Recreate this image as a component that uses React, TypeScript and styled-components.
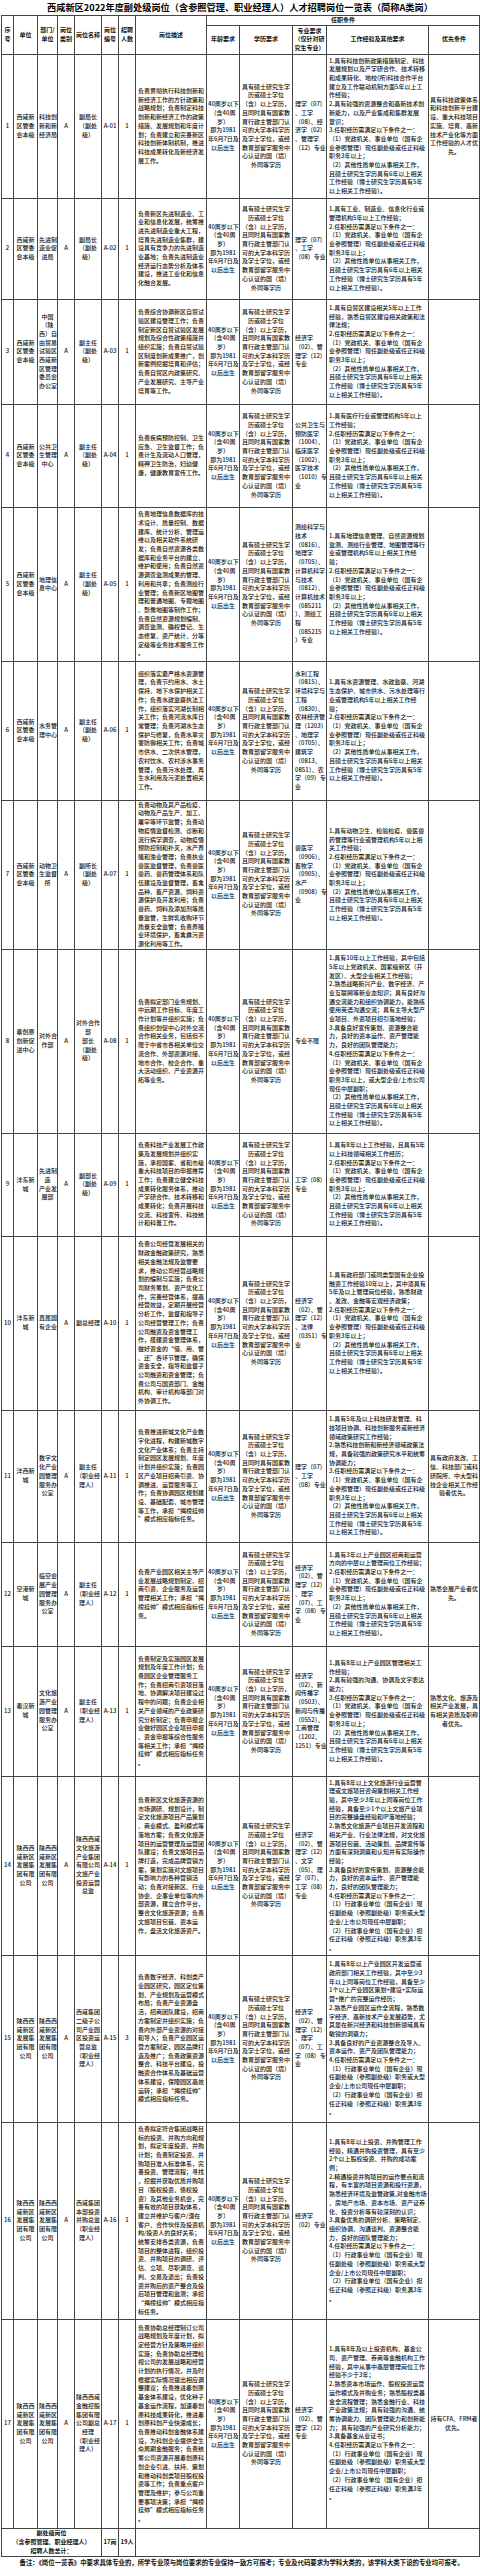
import React from "react";
import styled, { createGlobalStyle } from "styled-components";

const GlobalStyle = createGlobalStyle`
  html, body {
    margin: 0;
    padding: 0;
    background: #fff;
  }
  body {
    font-family: "Noto Sans CJK SC", "Noto Sans", sans-serif;
    color: #111;
  }
`;

const Page = styled.div`
  width: 480px;
  background: #fff;
`;

const Title = styled.h1`
  margin: 0;
  height: 15px;
  line-height: 15px;
  font-size: 9.2px;
  font-weight: 700;
  text-align: center;
  color: #000;
  white-space: nowrap;
`;

const Table = styled.table`
  margin-left: 1px;
  width: 478px;
  border-collapse: collapse;
  table-layout: fixed;
`;

const HeadCell = styled.th`
  border: 1px solid #444;
  padding: 0 1px;
  font-size: 6px;
  line-height: 8.7px;
  font-weight: 700;
  white-space: pre;
  text-align: center;
  vertical-align: middle;
  overflow: visible;
`;

const Cell = styled.td<{ $align?: "left" | "center"; $bold?: boolean }>`
  border: 1px solid #444;
  padding: 0 ${(p) => (p.$align === "left" ? "2px" : "1px")};
  font-size: 6px;
  line-height: 8.7px;
  font-weight: ${(p) => (p.$bold ? 700 : 500)};
  white-space: pre;
  text-align: ${(p) => p.$align ?? "center"};
  vertical-align: middle;
  overflow: visible;
`;

const Row = styled.tr<{ $h: number }>`
  height: ${(p) => p.$h}px;
`;

const NoteCell = styled.td`
  border-top: 1px solid #444;
  padding: 0 0 0 18px;
  height: 16px;
  font-size: 6.4px;
  font-weight: 700;
  line-height: 12px;
  white-space: nowrap;
  text-align: left;
  vertical-align: top;
`;

const widths = [12, 24, 20, 17, 27, 17, 17, 71, 33, 53, 34, 102, 51];

const AGE = "40周岁以下\n（含40周\n岁）\n即为1981\n年6月7日及\n以后出生";
const EDU =
  "具有硕士研究生学\n历或硕士学位\n（含）以上学历，\n且同时具有国家教\n育行政主管部门认\n可的大学本科学历\n及学士学位，或经\n教育部留学服务中\n心认证的国（境）\n外同等学历";
const GOV_TAIL =
  "（2）其他性质单位从事相关工作，\n且硕士研究生学历具有6年以上相关\n工作经验（博士研究生学历具有5年\n以上相关工作经验）。";
const GOV =
  "（1）党政机关、事业单位（国有企\n业参照管理）现任副处级或任正科级\n职务3年以上；\n" + GOV_TAIL;
const GROUP =
  "（1）行政事业单位（国有企业）现\n任副处级（参照副处级）职务或大型\n企业/上市公司现任中层副职；\n（2）行政事业单位（国有企业）担\n任正科级（参照正科级）职务满3年\n。";
const MGMT = "西咸新\n区管委\n会本级";
const GROUP_CO = "陕西西\n咸新区\n发展集\n团有限\n公司";

type Post = {
  no: number;
  unit: string;
  dept: string;
  name: string;
  count: number;
  desc: string;
  major: string;
  exp: string;
  pref?: string;
  h: number;
};

const posts: Post[] = [
  {
    no: 1,
    unit: MGMT,
    dept: "科技创\n新和新\n经济局",
    name: "副局长\n（副处\n级）",
    count: 1,
    desc: "负责贯彻执行科技创新和\n新经济工作的方针政策和\n战略规划；负责制定科技\n创新和新经济工作的政策\n措施、发展规划和年度计\n划；负责建立和完善新区\n科技创新体制机制，推进\n科技成果转化及新经济发\n展工作。",
    major: "理学（07）\n、工学\n（08）、经\n济学（02）\n、管理学\n（12）专业",
    exp:
      "1.具有科技创新政策措施制定、科技\n发展规划以及产学研合作、技术转移\n和成果转化、地校(所)科技合作平台\n建立及工作联动机制方面5年以上工\n作经验；\n2.具有较强的资源整合和高新技术创\n新能力，以及产业集成和集群发展\n意识；\n3.任职经历需满足以下条件之一：\n" +
      GOV,
    pref: "具有科技政策体系\n和科技创新平台建\n设、重大科技项目\n实施、培育、高新\n技术产业化等方面\n工作经验的人才优\n先。",
    h: 144,
  },
  {
    no: 2,
    unit: MGMT,
    dept: "先进制\n造业促\n进局",
    name: "副局长\n（副处\n级）",
    count: 1,
    desc: "负责新区先进制造业、工\n业和信息化发展，统筹推\n进先进制造业重大工程，\n培育先进制造业集群，建\n设具有竞争力的先进制造\n业基地；负责先进制造业\n经济运行态势分析及体系\n建设，推进工业化和信息\n化融合发展。",
    major: "理学（07）\n、工学\n（08）专业",
    exp:
      "1.具有工业、制造业、信息化行业或\n管理机构5年以上工作经验；\n2.任职经历需满足以下条件之一：\n" +
      GOV,
    h: 101,
  },
  {
    no: 3,
    unit: MGMT,
    dept: "中国\n（陕\n西）自\n由贸易\n试验区\n西咸新\n区管理\n委员会\n办公室",
    name: "副主任\n（副处\n级）",
    count: 1,
    desc: "负责综合协调新区自贸试\n验区建设管理工作；负责\n制定新区自贸试验区发展\n规划及综合性政策措施并\n组织实施；负责自贸试验\n区制度创新成果推广，创\n新案例挖掘培育和评估；\n负责自贸区内政策研究、\n产业发展研究、主导产业\n培育等工作。",
    major: "经济学\n（02）、管\n理学（12）\n专业",
    exp:
      "1.具有自贸区建设相关5年以上工作\n经验，熟悉自贸区建设相关政策和法\n律法规；\n2.任职经历需满足以下条件之一：\n" +
      GOV,
    h: 105,
  },
  {
    no: 4,
    unit: MGMT,
    dept: "公共卫\n生管理\n中心",
    name: "副主任\n（副处\n级）",
    count: 1,
    desc: "负责疾病预防控制、卫生\n应急、卫生监督工作；负\n责计生及流动人口管理，\n精神卫生防治，妇幼健\n康，健康教育宣传工作。",
    major: "公共卫生与\n预防医学\n（1004）、\n临床医学\n（1002）、\n医学技术\n（1010）专\n业",
    exp:
      "1.具有医疗行业或管理机构5年以上\n工作经验；\n2.任职经历需满足以下条件之一：\n" +
      GOV,
    h: 103,
  },
  {
    no: 5,
    unit: MGMT,
    dept: "地理信\n息中心",
    name: "副主任\n（副处\n级）",
    count: 1,
    desc: "负责地理信息数据库的技\n术设计、质量控制、数据\n建库、统计分析、管理运\n维以及相关软件系统研\n发；负责自然资源各类数\n据库和业务平台的建立、\n维护和使用；负责自然资\n源调查监测成果的管理、\n利用和共享；负责测绘行\n业管理；负责新区地图管\n理和普通地图、专题地图\n、影像地图等制作工作；\n负责自然资源规划编制、\n调查监测、确权登记、生\n态修复、资产统计、分等\n定级等业务技术服务工作\n。",
    major: "测绘科学与\n技术\n（0816）、\n地理学\n（0705）、\n计算机科学\n与技术\n（0812）、\n计算机技术\n（085211\n）、测绘工\n程\n（085215\n）专业",
    exp:
      "1.具有地理信息管理、自然资源规划\n监测、测绘行业管理、地图管理等行\n业或管理机构5年以上相关工作经\n验；\n2.任职经历需满足以下条件之一：\n" +
      GOV,
    h: 154,
  },
  {
    no: 6,
    unit: MGMT,
    dept: "水务管\n理中心",
    name: "副主任\n（副处\n级）",
    count: 1,
    desc: "组织落实最严格水资源管\n理，负责节约用水、水土\n保持、地下水保护相关工\n作；负责水政监察执法工\n作，组织落实河湖长制相\n关工作；负责河流水库日\n常管理；负责河湖水生态\n保护与修复，负责水旱灾\n害防御相关工作；负责城\n市供水、二次供水管理，\n农村饮水、农村涉水事务\n管理，负责污水处理、再\n生水利用及污泥处置相关\n工作。",
    major: "水利工程\n（0815）、\n环境科学与\n工程\n（0830）、\n农林经济管\n理（1203）\n、地理学\n（0705）、\n建筑学\n（0813、\n0851）、农\n学（09）专\n业",
    exp:
      "1.具有水资源管理、水政监察、河湖\n生态保护、城市供水、污水处理等行\n业或管理机构5年以上相关工作经\n验；\n2.任职经历需满足以下条件之一：\n" +
      GOV,
    h: 139,
  },
  {
    no: 7,
    unit: MGMT,
    dept: "动物卫\n生监督\n所",
    name: "副所长\n（副处\n级）",
    count: 1,
    desc: "负责动物及其产品检疫、\n动物及产品生产、加工、\n屠宰等环节监管；负责动\n物疫情监督检测、诊断和\n流行病学调查，动物疫情\n预防控制和扑灭，水产养\n殖和渔业管理；负责执业\n兽医监督管理，负责兽医\n兽药、兽药管理体系和队\n伍建设及监督管理，畜禽\n品种、畜产资源、饲料资\n源保护及开发利用；负责\n兽药、饲料及添加剂等质\n量监管，生鲜乳收购环节\n质量安全监管；负责养殖\n业环境保护，畜禽粪污资\n源化利用等工作。",
    major: "兽医学\n（0906）、\n畜牧学\n（0905）、\n水产\n（0908）专\n业",
    exp:
      "1.具有动物卫生、检验检疫、兽医兽\n药管理等行业或管理机构5年以上相\n关工作经验；\n2.任职经历需满足以下条件之一：\n" +
      GOV,
    h: 148,
  },
  {
    no: 8,
    unit: "秦创原\n创新促\n进中心",
    dept: "对外合\n作部",
    name: "对外合作\n部\n部长\n（副处\n级）",
    count: 1,
    desc: "负责拟定部门业务规划、\n中远期工作目标、年度工\n作计划等并组织实施；负\n责组织创促中心对外交流\n合作相关业务，包括但不\n限于中省市各相关单位交\n流合作、外部资源对接、\n地市合作、校企合作、重\n大活动组织、产业资源开\n拓等业务。",
    major: "专业不限",
    exp:
      "1.具有10年以上工作经验，其中包括\n5年以上党政机关、国家级新区（开\n发区）、大型企业相关工作经验；\n2.熟悉战略新兴产业、数字经济、产\n业互联网等新业态知识；具有良好沟\n通交流能力和组织协调能力，能熟练\n使用英语沟通交流；具有主导大型产\n业项目、外资项目招引落地经验；\n3.具备良好宣传策划、资源整合能\n力，良好的资本运作、资产管理能\n力，良好的团队管理能力；\n4.任职经历需满足以下条件之一：\n（1）党政机关、事业单位（国有企\n业参照管理）现任副处级或任正科级\n职务3年以上，或大型企业/上市公司\n现任中层副职；\n" +
      GOV_TAIL,
    h: 184,
  },
  {
    no: 9,
    unit: "沣东新\n城",
    dept: "先进制\n造\n产业发\n展部",
    name: "副部长\n（副处\n级）",
    count: 1,
    desc: "负责科技产业发展工作政\n策及发展规划并组织实\n施，承担国家、省和市级\n重大科技项目的申报推荐\n工作；负责建立健全科技\n成果转化服务体系，推动\n产学研合作、技术转移和\n成果转化；负责开展科技\n交流、科技宣传、科技统\n计和科普工作。",
    major: "工学（08）\n专业",
    exp:
      "1.具有8年以上工作经验，且具有5年\n以上科技领域相关工作经历；\n2.任职经历需满足以下条件之一：\n" +
      GOV,
    h: 103,
  },
  {
    no: 10,
    unit: "沣东新\n城",
    dept: "直属国\n有企业",
    name: "副总经理",
    count: 1,
    desc: "负责公司经营发展相关的\n财政金融政策研究，熟悉\n相关金融法规及监管要\n求，推动公司经营战略规\n划的编制与实施；负责公\n司财务筹划、资产优化工\n作，完善经营体系，提高\n经营效益，定期开展经营\n分析工作，监督和指导子\n公司经营管理工作；负责\n公司融资及资金管理工\n作，搭建资金管理体系，\n做好资金的“借、用、管\n、还”各环节管理，确保\n资金安全，指导和监督子\n公司融资和资金管理；负\n责公司与国资部门、金融\n机构、审计机构等部门对\n外协调工作。",
    major: "经济学\n（02）、管\n理学（12）\n、法律\n（0351）专\n业",
    exp:
      "1.具有政府部门或同类型国有企业投\n融资工作经验10年以上，其中须具有\n5年及以上管理岗位经验，熟悉财政\n、发改、金融等宏观经济政策；\n2.任职经历需满足以下条件之一：\n" +
      GOV,
    h: 174,
  },
  {
    no: 11,
    unit: "沣西新\n城",
    dept: "数字文\n化产业\n园管理\n服务办\n公室",
    name: "副主任\n（职业经\n理人）",
    count: 1,
    desc: "负责推进新城文化产业数\n字化进程，构建新城数字\n文化产业体系；负责主持\n制定园区发展规划、年度\n计划并组织实施；负责园\n区产业项目招商引资、协\n调推进、运营服务等工\n作；负责协调园区规划建\n设、基础配套、城市管理\n等工作，承担“揭榜挂帅\n”模式相应指标任务。",
    major: "理学（07）\n、工学\n（08）专业",
    exp:
      "1.具有5年及以上科技研发管理、科\n技项目协调、科技创新服务或新经济\n领域政策研究工作经验；\n2.熟悉科技创新和新经济领域政策法\n规，具备较强的政策研究水平和统筹\n协调能力；\n3.任职经历需满足以下条件之一：\n" +
      GOV,
    pref: "具有政府发改、工\n信、科技部门或科\n研院所、中大型科\n技企业相关工作经\n验者优先。",
    h: 132,
  },
  {
    no: 12,
    unit: "空港新\n城",
    dept: "临空会\n展产业\n园管理\n服务办\n公室",
    name: "副主任\n（职业经\n理人）",
    count: 1,
    desc: "负责产业园区相关主导产\n业发展战略规划制定、招\n商引资、企业服务及运营\n管理相关工作；承担“揭\n榜挂帅”模式相应指标任\n务。",
    major: "经济学\n（02）、管\n理学（12）\n、理学\n（07）、工\n学（08）专\n业",
    exp:
      "1.具有3年以上产业园区招商和运营\n方向的中层以上管理岗位工作经验；\n2.任职经历需满足以下条件之一：\n" +
      GOV,
    pref: "熟悉会展产业者优\n先。",
    h: 104,
  },
  {
    no: 13,
    unit: "秦汉新\n城",
    dept: "文化旅\n游产业\n园管理\n服务办\n公室",
    name: "副主任\n（职业经\n理人）",
    count: 1,
    desc: "负责制定及实施园区发展\n规划及年度工作计划；负\n责园区企业管理服务工\n作；负责招商引资项目落\n地、协调解决项目建设过\n程中的问题；负责企业相\n关产业领域的产业政策研\n究分析制定；负责申报企\n业做好园区企业项目申报\n、资金申报等综合性服务\n等相关工作；承担“揭榜\n挂帅”模式相应指标任务\n。",
    major: "经济学\n（02）、新\n闻传播学\n（0503）、\n新闻与传播\n（0552）、\n工商管理\n（1202、\n1251）专业",
    exp:
      "1.具有8年以上产业园区管理相关工\n作经验；\n2.具有较强的沟通、协调及文字表达\n能力；\n3.任职经历需满足以下条件之一：\n" +
      GOV,
    pref: "熟悉文化、旅游及\n相关产业发展，具\n有相关资质及职称\n者优先。",
    h: 130,
  },
  {
    no: 14,
    unit: GROUP_CO,
    dept: GROUP_CO,
    name: "陕西西咸\n文化旅游\n产业集团\n有限公司\n文旅产业\n投资运营\n总监",
    count: 1,
    desc: "负责新区文化旅游资源的\n市场调研、规划设计，制\n定文化旅游项目产品策划\n、商业模式、盈利模式等\n落地方案；负责文化旅游\n项目的运营管理及运营团\n队建设；负责文旅项目品\n牌打造，完成品牌营销方\n案，策划实施对文旅项目\n有影响力的各种营销活\n动；负责对接新区、行业\n协会、企事业单位等内外\n部资源，建立合作平台，\n整合文化旅游资源；负责\n文旅项目包装、资本运\n作，盘活文化旅游资产。",
    major: "经济学\n（02）、管\n理学（12）\n、文学\n（05）、理\n学（07）、\n工学（08）\n专业",
    exp:
      "1.具有8年以上文化旅游行业运营管\n理或文旅项目咨询策划相关工作经\n验，其中至少3年以上同等岗位工作\n经验，具备至少1个以上文旅产业项\n目的完整操盘经验和IP落地经验；\n2.熟悉文化旅游产业项目开发流程和\n相关产业、行业法律法规，对文化旅\n游项目包装、活动策划、品牌宣传等\n方面有深刻洞察和认知并有实际操作\n经验；\n3.具备良好的宣传策划、资源整合能\n力，良好的资本运作、资产管理能\n力，良好的团队管理能力；\n4.任职经历需满足以下条件之一：\n" +
      GROUP,
    h: 179,
  },
  {
    no: 15,
    unit: GROUP_CO,
    dept: GROUP_CO,
    name: "西咸集团\n二级子公\n司产业园\n区投资运\n营总监\n（职业经\n理人）",
    count: 3,
    desc: "负责数字经济、科创类产\n业园区研究，园区定位策\n划、产业规划及运营模式\n布局；负责产业资源盘\n活，招商团队建设，招商\n方案制定并组织实施；负\n责内外部产业资源的对接\n和导入；负责产业园区运\n营方案制定，园区品牌打\n造及推广；负责政策资源\n整合、科技平台建设，投\n融资合作体系及基础运营\n体系建设，保障园区高效\n运转；承担“揭榜挂帅”\n模式相应指标任务。",
    major: "经济学\n（02）、管\n理学（12）\n、理学\n（07）、工\n学（08）专\n业",
    exp:
      "1.具有8年以上产业园区开发运营或\n政府部门相关工作经验，其中至少3\n年以上同等岗位工作经验，具备至少\n1个以上产业园区策划+建设+实际运\n营+推广的完整运作经历；\n2.熟悉产业园区运作全流程，熟悉数\n字经济、高新技术产业发展趋势，尤\n其是在新兴经济和科技创新领域具有\n敏锐的洞察力；\n3.具备良好的产业资源整合及导入、\n资本运作、资产及团队管理能力；\n4.任职经历需满足以下条件之一：\n" +
      GROUP,
    h: 167,
  },
  {
    no: 16,
    unit: GROUP_CO,
    dept: GROUP_CO,
    name: "西咸集团\n本部投资\n并购总监\n（职业经\n理人）",
    count: 1,
    desc: "负责拟定符合集团战略目\n标的投资、并购方向和规\n划，拟定年度投资、并购\n计划；负责制定投资、并\n购项目准入标准体系，完\n善投资、管理流程；寻找\n，挖掘并获取优质并购项\n目（股权投资、债权投\n资）及其他业务机会，完\n善有效的项目获取体系，\n建立并维护与客户/潜在\n客户、合作伙伴及投资机\n构/投资人的良好关系；\n统筹安排各类资源，负责\n项目的整体进程，组织投\n资、并购项目的调研、评\n估、立项、尽职调查、谈\n判、交易及退出；负责投\n资并购后的资产整合及投\n后项目管理和监测；承担\n“揭榜挂帅”模式相应指\n标任务。",
    major: "经济学\n（02）专业",
    exp:
      "1.具有8年以上投资、并购管理工作\n经验，精通并购投资管理，具有至少\n2个以上股权投资、并购的成功案\n例；\n2.精通投资并购项目的运作要点和流\n程，有丰富的项目资源和投行资源，\n熟悉经济环境及监管政策,对金融市场\n、房地产市场、资本市场、资产证券\n化、投资分析等有较深刻的认识；\n3.具备优秀的调研分析、策略制定、\n组织协调、沟通谈判、资源整合能\n力，良好的团队管理能力；\n4.任职经历需满足以下条件之一：\n" +
      GROUP,
    h: 197,
  },
  {
    no: 17,
    unit: GROUP_CO,
    dept: GROUP_CO,
    name: "陕西西咸\n金融控股\n集团有限\n公司副总\n经理\n（职业经\n理人）",
    count: 1,
    desc: "负责协助总经理制订公司\n战略规划及年度计划，拟\n定经营方针及策略并组织\n实施；负责协助总经理检\n视公司的发展战略和经营\n计划的执行情况，并及时\n根据实际情况提出相应调\n整建议；负责推进秦创原\n基金体系建设，优化种子\n基金运作流程，加速秦创\n原科技成果转化，推进秦\n创原科创产业快速成长；\n负责推动科创金融体系建\n设，为科创企业提供全生\n命周期金融服务；负责统\n筹公司资源开展秦创原科\n创企业引进、扶持、策划\n和推动科创类项目股权投\n资等工作；负责重点客户\n管理及维护；参与公司重\n要事项决策；承担“揭榜\n挂帅”模式相应指标任务\n。",
    major: "经济学\n（02）、管\n理学（12）\n专业",
    exp:
      "1.具有8年及以上投资机构、基金公\n司、资产管理、券商等金融机构工作\n经验，其中从事中高层管理岗位工作\n经验不少于3年；\n2.熟悉资本市场运作、股权投资运营\n运作模式及并购业务；熟悉股权类基\n金全流程管理；熟悉金融行业、科技\n产业政策法规；具有较强的沟通、统\n筹协调能力、团队管理能力和创新能\n力；具有较强的产业研究分析能力；\n3.具备基金从业证书；\n4.任职经历需满足以下条件之一：\n" +
      GROUP,
    pref: "持有CFA、FRM者\n优先。",
    h: 209,
  },
];

const App = () => {
  return (
    <Page>
      <GlobalStyle />
      <Title>西咸新区2022年度副处级岗位（含参照管理、职业经理人）人才招聘岗位一览表（简称A类岗）</Title>
      <Table>
        <colgroup>
          {widths.map((w, i) => (
            <col key={i} style={{ width: w }} />
          ))}
        </colgroup>
        <thead>
          <Row $h={9}>
            <HeadCell rowSpan={2}>{"序\n号"}</HeadCell>
            <HeadCell rowSpan={2}>单位</HeadCell>
            <HeadCell rowSpan={2}>{"部门/\n单位"}</HeadCell>
            <HeadCell rowSpan={2}>{"岗位\n类别"}</HeadCell>
            <HeadCell rowSpan={2}>岗位名称</HeadCell>
            <HeadCell rowSpan={2}>{"岗位\n编号"}</HeadCell>
            <HeadCell rowSpan={2}>{"招聘\n人数"}</HeadCell>
            <HeadCell rowSpan={2}>岗位描述</HeadCell>
            <HeadCell colSpan={5}>任职条件</HeadCell>
          </Row>
          <Row $h={29}>
            <HeadCell>年龄要求</HeadCell>
            <HeadCell>学历要求</HeadCell>
            <HeadCell>{"专业要求\n（仅针对研\n究生专业）"}</HeadCell>
            <HeadCell>工作经验及其他要求</HeadCell>
            <HeadCell>优先条件</HeadCell>
          </Row>
        </thead>
        <tbody>
          {posts.map((p) => (
            <Row key={p.no} $h={p.h}>
              <Cell>{p.no}</Cell>
              <Cell>{p.unit}</Cell>
              <Cell>{p.dept}</Cell>
              <Cell>A</Cell>
              <Cell>{p.name}</Cell>
              <Cell>{`A-${String(p.no).padStart(2, "0")}`}</Cell>
              <Cell>{p.count}</Cell>
              <Cell $align="left">{p.desc}</Cell>
              <Cell>{AGE}</Cell>
              <Cell>{EDU}</Cell>
              <Cell $align="left">{p.major}</Cell>
              <Cell $align="left">{p.exp}</Cell>
              <Cell>{p.pref ?? ""}</Cell>
            </Row>
          ))}
          <Row $h={28}>
            <Cell colSpan={5} $bold>
              {"副处级岗位\n（含参照管理、职业经理人）\n招聘人数总计："}
            </Cell>
            <Cell $bold>17岗</Cell>
            <Cell $bold>19人</Cell>
            <Cell colSpan={6} />
          </Row>
          <tr>
            <NoteCell colSpan={13}>
              备注：《岗位一览表》中要求具体专业的，所学专业须与岗位要求的专业保持一致方可报考；专业及代码要求为学科大类的，该学科大类下设的专业均可报考。
            </NoteCell>
          </tr>
        </tbody>
      </Table>
    </Page>
  );
};

export default App;
